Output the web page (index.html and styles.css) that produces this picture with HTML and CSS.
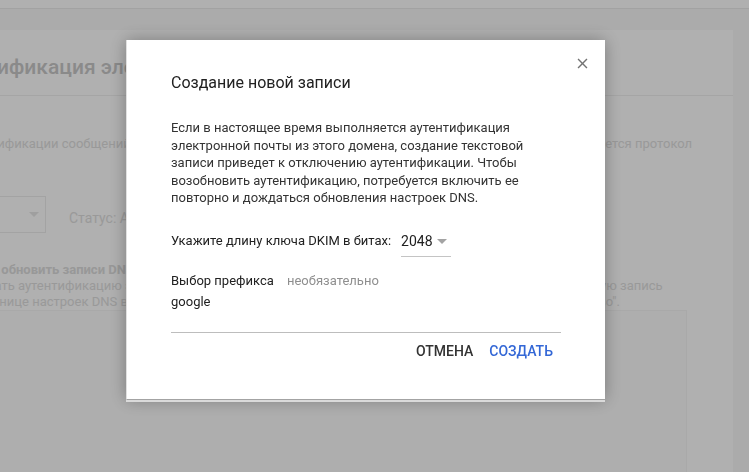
FILE: index.html
```html
<!DOCTYPE html>
<html lang="ru">
<head>
    <meta charset="UTF-8">
    <meta name="viewport" content="width=device-width, initial-scale=1.0">
    <title>Аутентификация электронной почты</title>
    <link rel="stylesheet" href="styles.css">
</head>
<body>
    <div class="topbar"></div>

    <main class="page">
        <section class="card">
            <header class="card-head">
                <h1>Аутентификация электронной почты</h1>
            </header>
            <div class="card-body">
                <p class="intro">Для аутентификации сообщений электронной почты, отправляемых с домена, для защиты от спама применяется протокол</p>
                <div class="filters">
                    <div class="domain-select">
                        <span>Домен</span>
                        <span class="caret"></span>
                    </div>
                    <span class="status">Статус: Аутентификация не выполняется</span>
                </div>
                <h2 class="notice-title">Вам нужно обновить записи DNS</h2>
                <p class="notice">
                    Чтобы начать аутентификацию электронной почты, скопируйте сгенерированный ключ DKIM и создайте новую запись<br>
                    на той странице настроек DNS вашего регистратора доменов, а после этого нажмите в консоли кнопку "Готово".
                </p>
                <div class="record-box"></div>
            </div>
        </section>
    </main>

    <div class="scrim"></div>

    <div class="dialog">
        <button class="dialog-close" type="button">
            <svg width="17" height="17" viewBox="0 0 24 24">
                <path d="M19 6.41L17.59 5 12 10.59 6.41 5 5 6.41 10.59 12 5 17.59 6.41 19 12 13.41 17.59 19 19 17.59 13.41 12z" fill="#737373"/>
            </svg>
        </button>
        <h2 class="dialog-title">Создание новой записи</h2>
        <p class="dialog-text">Если в настоящее время выполняется аутентификация электронной почты из этого домена, создание текстовой записи приведет к отключению аутентификации. Чтобы возобновить аутентификацию, потребуется включить ее повторно и дождаться обновления настроек DNS.</p>

        <div class="field-row">
            <label>Укажите длину ключа DKIM в битах:</label>
            <div class="select">
                <span>2048</span>
                <span class="select-caret"></span>
            </div>
        </div>

        <div class="prefix-field">
            <div class="prefix-label">Выбор префикса <span class="hint">необязательно</span></div>
            <div class="prefix-input">google</div>
        </div>

        <div class="dialog-actions">
            <button type="button">Отмена</button>
            <button type="button" class="primary">Создать</button>
        </div>
    </div>
</body>
</html>
```

FILE: styles.css
```css
body {
    font-family: Roboto, "Noto Sans", sans-serif;
    background-color: #f8f8f8;
    margin: 0;
    padding: 0;
    overflow: hidden;
    height: 472px;
}
.topbar {
    height: 8px;
    background-color: #fff;
    border-bottom: 1px solid #ebebeb;
}

/* page behind the dialog */
.page {
    margin-left: -90px;
    padding: 21px 16px 0 0;
}
.card {
    background-color: #fff;
    padding: 0 46px 0 20px;
    height: 442px;
}
.card-head {
    padding: 23px 0 14px;
    border-bottom: 1px solid #f0f0f0;
    margin-right: -46px;
}
.card-head h1 {
    margin: 0;
    font-size: 21px;
    line-height: 28px;
    font-weight: 500;
    color: #c8c8c8;
}
.card-body {
    font-size: 13px;
    color: #dedede;
}
.intro {
    margin: 39px 0 0;
    line-height: 18px;
    white-space: nowrap;
}
.filters {
    display: flex;
    align-items: center;
    margin-top: 43px;
}
.domain-select {
    width: 116px;
    height: 37px;
    box-sizing: border-box;
    border: 1px solid #ececec;
    display: flex;
    align-items: center;
    justify-content: space-between;
    padding: 0 6px 0 8px;
    color: #fff;
}
.caret {
    border-left: 5px solid transparent;
    border-right: 5px solid transparent;
    border-top: 5px solid #e6e6e6;
}
.status {
    margin-left: 23px;
    margin-top: 6px;
    font-size: 14px;
}
.notice-title {
    margin: 29px 0 0;
    font-size: 13px;
    line-height: 16px;
    font-weight: 700;
    color: #dcdcdc;
}
.notice {
    margin: 0;
    line-height: 16px;
    white-space: nowrap;
}
.record-box {
    height: 200px;
    background-color: #fcfcfc;
    border: 1px solid #f5f5f5;
}

.scrim {
    position: fixed;
    top: 0;
    left: 0;
    width: 100%;
    height: 100%;
    background-color: rgba(0, 0, 0, 0.31);
}

/* dialog */
.dialog {
    position: fixed;
    top: 40px;
    left: 126px;
    width: 479px;
    box-sizing: border-box;
    padding: 33px 44px 30px 44px;
    background-color: #fff;
    border-left: 1px solid #e0e0e0;
    border-bottom: 1px solid #a3a3a3;
    box-shadow: 0 2px 0 #dadada, 0 0 16px rgba(0, 0, 0, 0.3);
    color: #212121;
}
.dialog-close {
    position: absolute;
    top: 11px;
    right: 11px;
    width: 24px;
    height: 24px;
    padding: 0;
    border: none;
    background: none;
    display: flex;
    align-items: center;
    justify-content: center;
    cursor: pointer;
}
.dialog-title {
    margin: 0;
    font-size: 16px;
    line-height: 20px;
    font-weight: 400;
}
.dialog-text {
    margin: 26px 0 0;
    font-size: 13px;
    line-height: 17.6px;
    color: #333;
}
.field-row {
    display: flex;
    align-items: center;
    margin-top: 18px;
    font-size: 13px;
}
.select {
    margin-left: 10px;
    width: 50px;
    height: 32px;
    box-sizing: border-box;
    padding-top: 2px;
    border-bottom: 1px solid #c4c4c4;
    display: flex;
    align-items: center;
    font-size: 14px;
}
.select-caret {
    margin-left: 4px;
    border-left: 5px solid transparent;
    border-right: 5px solid transparent;
    border-top: 5px solid #a3a3a3;
}
.prefix-field {
    margin-top: 15px;
    font-size: 13px;
}
.prefix-label {
    line-height: 18px;
}
.hint {
    margin-left: 10px;
    color: #8f8f8f;
}
.prefix-input {
    line-height: 18px;
    padding: 3px 0 21px;
    border-bottom: 1px solid #bdbdbd;
}
.dialog-actions {
    display: flex;
    justify-content: flex-end;
}
.dialog-actions button {
    height: 36px;
    padding: 0 8px;
    border: none;
    background: none;
    font-family: inherit;
    font-size: 14px;
    font-weight: 500;
    text-transform: uppercase;
    color: #333;
    cursor: pointer;
}
.dialog-actions .primary {
    color: #3367d6;
}
```
